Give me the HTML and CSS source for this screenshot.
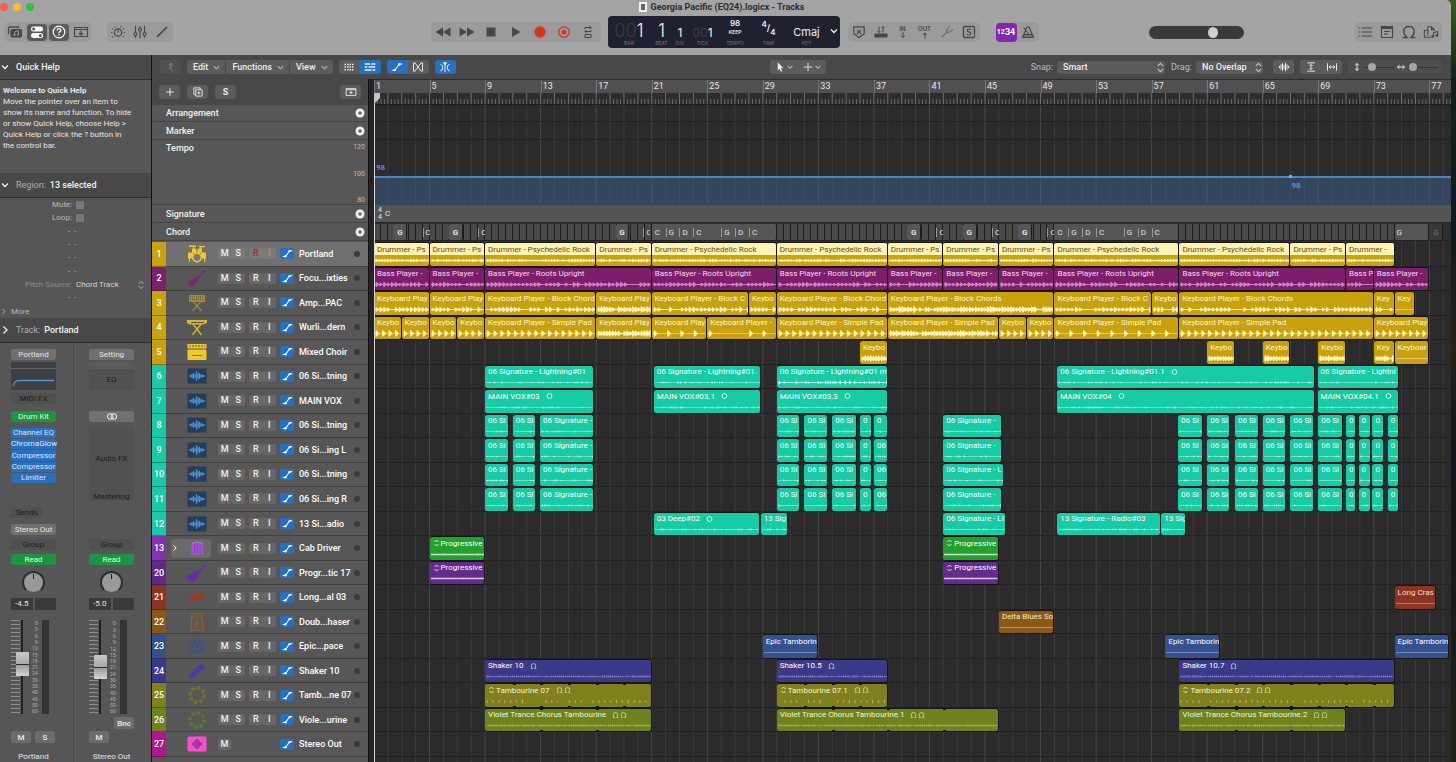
FILE: index.html
```html
<!DOCTYPE html>
<html lang="en">
<head>
    <meta charset="UTF-8">
    <meta name="viewport" content="width=device-width, initial-scale=1.0">
    <title>Georgia Pacific (EQ24).logicx - Tracks</title>
    <link rel="stylesheet" href="styles.css">
</head>
<body>
    <!-- icon sprite -->
    <svg class="sprite" aria-hidden="true">
        <symbol id="i-library" viewBox="0 0 16 16"><path d="M1.500 10V4q0-1 1-1H11q1 0 1 1" fill="none" stroke="currentColor" stroke-width="1.300"/><rect x="3.500" y="5" width="11.500" height="8.500" rx="1.500" fill="currentColor"/><path d="M8 11V7.500l3.500-.7v3.700" fill="none" stroke="#999"/><circle cx="7.300" cy="11" r="1" fill="#999"/><circle cx="10.800" cy="10.400" r="1" fill="#999"/></symbol>
        <symbol id="i-inspector" viewBox="0 0 16 16"><rect x="2" y="2.500" width="12" height="5" rx="2.500" fill="currentColor"/><rect x="2" y="9" width="12" height="5" rx="2.500" fill="currentColor"/><circle cx="4.700" cy="5" r="1.500" fill="#555"/><circle cx="11.300" cy="11.500" r="1.500" fill="#555"/></symbol>
        <symbol id="i-help" viewBox="0 0 16 16"><circle cx="8" cy="8" r="5.800" fill="none" stroke="currentColor" stroke-width="1.200"/><path d="M6.200 6.500q0-1.800 1.800-1.800t1.800 1.600q0 1-1 1.500T8 9.300" fill="none" stroke="currentColor" stroke-width="1.200"/><circle cx="8" cy="11" r=".8" fill="currentColor"/></symbol>
        <symbol id="i-tray" viewBox="0 0 16 16"><path d="M1.500 3.500h13v9h-13zM1.500 5.500h13M8 6.500v4M6 9l2 2 2-2" fill="none" stroke="currentColor" stroke-width="1.200"/></symbol>
        <symbol id="i-smart" viewBox="0 0 16 16"><circle cx="8" cy="8.500" r="3.700" fill="none" stroke="currentColor" stroke-width="1.200"/><path d="M8 4.800v4" stroke="currentColor" stroke-width="1.200"/><path d="M5 2.200l.5 1M11 2.200l-.5 1M2 4.500l1 .7M14 4.500l-1 .7M1 8.500h1.300M13.700 8.500H15M2.300 13l1-.8M13.700 13l-1-.8" stroke="currentColor" stroke-width="1.100"/></symbol>
        <symbol id="i-mixer" viewBox="0 0 16 16"><path d="M3.500 2v12M8 2v12M12.500 2v12" stroke="currentColor" stroke-width="1.200"/><g fill="#999" stroke="currentColor" stroke-width="1.200"><circle cx="3.500" cy="10" r="1.500"/><circle cx="8" cy="5.500" r="1.500"/><circle cx="12.500" cy="10" r="1.500"/></g></symbol>
        <symbol id="i-pencil" viewBox="0 0 16 16"><path d="M3 13L13 3" stroke="currentColor" stroke-width="1.700"/></symbol>
        <symbol id="i-rewind" viewBox="0 0 16 16"><path d="M8 3.500v9L.5 8zM15.500 3.500v9L8 8z" fill="currentColor"/></symbol>
        <symbol id="i-forward" viewBox="0 0 16 16"><path d="M8 3.500v9L15.500 8zM.5 3.500v9L8 8z" fill="currentColor"/></symbol>
        <symbol id="i-stop" viewBox="0 0 16 16"><rect x="3.500" y="3.500" width="9" height="9" fill="currentColor"/></symbol>
        <symbol id="i-play" viewBox="0 0 16 16"><path d="M4 3v10l8.500-5z" fill="currentColor"/></symbol>
        <symbol id="i-record" viewBox="0 0 16 16"><circle cx="8" cy="8" r="5.700" fill="#d63324"/></symbol>
        <symbol id="i-capture" viewBox="0 0 16 16"><circle cx="8" cy="8" r="5.200" fill="none" stroke="#d63324" stroke-width="1.300"/><circle cx="8" cy="8" r="2.500" fill="#d63324"/></symbol>
        <symbol id="i-cycle" viewBox="0 0 16 16"><path d="M5 5V3.500h6M9.500 2L11 3.500 9.500 5M11 6v1.500H5M6.500 6L5 7.500 6.500 9M5 10.500h6v3H5z" fill="none" stroke="currentColor"/></symbol>
        <symbol id="i-shield" viewBox="0 0 16 16"><path d="M2.800 2.800h10.400v7L8 13.500 2.800 9.800zM6 5.800l4 4M10 5.800l-4 4" fill="none" stroke="currentColor" stroke-width="1.200"/></symbol>
        <symbol id="i-replace" viewBox="0 0 16 16"><path d="M1.500 9.500h13v4h-13z" fill="currentColor"/><path d="M6 2.500v6M4.500 7L6 8.500 7.500 7M10 8.500v-6M8.500 4L10 2.500 11.500 4" fill="none" stroke="currentColor"/></symbol>
        <symbol id="i-down" viewBox="0 0 8 7"><path d="M4 0v5.500M2 3.700l2 2 2-2" fill="none" stroke="currentColor"/></symbol>
        <symbol id="i-up" viewBox="0 0 8 7"><path d="M4 6.500V1M2 3l2-2 2 2" fill="none" stroke="currentColor"/></symbol>
        <symbol id="i-tuner" viewBox="0 0 16 16"><path d="M2.500 13.500L8 8M10.500 2L7.500 6.500Q7.500 8.500 9.500 8.500L14 5.500" fill="none" stroke="currentColor" stroke-width="1.200"/></symbol>
        <symbol id="i-solo" viewBox="0 0 16 16"><rect x="2.500" y="2.500" width="11" height="11" rx="1" fill="none" stroke="currentColor" stroke-width="1.300"/><path d="M10 6q-.4-1-2-1-1.800 0-1.800 1.300T8 7.900t2 1.600Q10 11 8 11q-1.700 0-2-1.200" fill="none" stroke="currentColor" stroke-width="1.200"/></symbol>
        <symbol id="i-metronome" viewBox="0 0 16 16"><path d="M2.500 13.500L7 3h2l4.500 10.500zM3.800 10.500h8.400M9 10.500L3.500 3.500" fill="none" stroke="currentColor" stroke-width="1.200"/><path d="M4 10.500h8l1.200 2.500H3z" fill="currentColor" opacity=".5"/></symbol>
        <symbol id="i-list" viewBox="0 0 16 16"><path d="M5 4h10M5 8h10M5 12h10M1.500 4h1.700M1.500 8h1.700M1.500 12h1.700" stroke="currentColor" stroke-width="1.200"/></symbol>
        <symbol id="i-note" viewBox="0 0 16 16"><path d="M2.500 2.500h11v11h-11zM5 7.500h6M5 10h4" fill="none" stroke="currentColor" stroke-width="1.200"/><path d="M2 2h12v3H2z" fill="currentColor"/></symbol>
        <symbol id="i-loop" viewBox="0 0 16 16"><path d="M1.500 13.500H6Q2.800 11 2.800 7.600 2.800 2.500 8 2.500t5.200 5.100Q13.200 11 10 13.500h4.500" fill="none" stroke="currentColor" stroke-width="1.400"/></symbol>
        <symbol id="i-media" viewBox="0 0 18 16"><path d="M1.500 6v8h8M1.500 6h4M5.500 12V2h4l3 3v2M9.500 2v3.500h3" fill="none" stroke="currentColor" stroke-width="1.200"/><path d="M12 13V8.500l4.500-1V12" fill="none" stroke="currentColor" stroke-width="1.200"/><circle cx="11" cy="13" r="1.500" fill="currentColor"/><circle cx="15.500" cy="12" r="1.500" fill="currentColor"/></symbol>
        <symbol id="i-chev-down" viewBox="0 0 10 10"><path d="M2 3.500l3 3 3-3" fill="none" stroke="currentColor" stroke-width="1.300"/></symbol>
        <symbol id="i-chev-right" viewBox="0 0 10 10"><path d="M3.500 1.500L7 5 3.500 8.500" fill="none" stroke="currentColor" stroke-width="1.300"/></symbol>
        <symbol id="i-updown" viewBox="0 0 10 12"><path d="M2 4.500L5 1.500l3 3M2 7.500l3 3 3-3" fill="none" stroke="currentColor" stroke-width="1.300"/></symbol>
        <symbol id="i-hier" viewBox="0 0 16 16"><path d="M5 6l3-3 3 3M8 3v8q0 2 3 2M8 8.500Q5 8.500 5 11" fill="none" stroke="currentColor" stroke-width="1.200"/></symbol>
        <symbol id="i-grid" viewBox="0 0 16 16"><path d="M2 4.500h12M2 8h12M2 11.500h12" stroke="currentColor" stroke-width="2" stroke-dasharray="2 1.300"/></symbol>
        <symbol id="i-rows" viewBox="0 0 16 16"><path d="M1 4h7M9.500 4H15M1 8h3.500M6 8h9M1 12h9M11.500 12H15" stroke="currentColor" stroke-width="2"/></symbol>
        <symbol id="i-auto" viewBox="0 0 16 16"><path d="M1 12.300h3.500Q6 12 8 8.300T12 4h3" fill="none" stroke="currentColor" stroke-width="1.500"/><circle cx="5" cy="12" r="1.700" fill="currentColor"/><circle cx="11" cy="4.500" r="1.700" fill="currentColor"/></symbol>
        <symbol id="i-flex" viewBox="0 0 16 16"><path d="M2 2.500v11h2L8 8l4 5.500h2v-11h-2L8 8 4 2.500z" fill="none" stroke="currentColor" stroke-width="1.300"/></symbol>
        <symbol id="i-catch" viewBox="0 0 16 16"><path d="M5 1.500h6L8 6z" fill="currentColor"/><path d="M8 4v11M2 4.500q3 1 3 4t-3 5M14 4.500q-3 1-3 4t3 5" fill="none" stroke="currentColor" stroke-width="1.400"/></symbol>
        <symbol id="i-pointer" viewBox="0 0 16 16"><path d="M5 1.500v11l2.600-2.300 1.600 4 1.700-.8-1.700-3.700 3.300-.2z" fill="currentColor"/></symbol>
        <symbol id="i-cross" viewBox="0 0 16 16"><path d="M8 2.500v4M8 9.500v4M2.500 8h4M9.500 8h4M8 7v2M7 8h2" stroke="currentColor" stroke-width="1.300"/></symbol>
        <symbol id="i-bars" viewBox="0 0 16 16"><path d="M2 6.500v3M4 4.500v7M6 3v10M8 5v6M10 2.500v11M12 4.500v7M14 6.500v3" stroke="currentColor" stroke-width="1.300"/></symbol>
        <symbol id="i-vfit" viewBox="0 0 16 16"><path d="M3 2.500h10M3 13.500h10M8 5v6M6 6.500L8 4.500l2 2M6 9.500l2 2 2-2" fill="none" stroke="currentColor" stroke-width="1.300"/></symbol>
        <symbol id="i-hfit" viewBox="0 0 16 16"><path d="M2 3v10M14 3v10M4.500 8h7M6 6L4.300 8 6 10M10 6l1.700 2L10 10" fill="none" stroke="currentColor" stroke-width="1.300"/></symbol>
        <symbol id="i-varrow" viewBox="0 0 10 12"><path d="M5 2v8M3 4l2-2.300L7 4M3 8l2 2.300L7 8" fill="none" stroke="currentColor" stroke-width="1.200"/></symbol>
        <symbol id="i-harrow" viewBox="0 0 12 10"><path d="M2 5h8M4 3L1.700 5 4 7M8 3l2.300 2L8 7" fill="none" stroke="currentColor" stroke-width="1.200"/></symbol>
        <symbol id="i-plus" viewBox="0 0 16 16"><path d="M8 3v10M3 8h10" stroke="currentColor" stroke-width="1.300"/></symbol>
        <symbol id="i-dup" viewBox="0 0 16 16"><path d="M11 5V2.500H2.500V11H5M5 5h8.500v8.500H5zM9.200 7v4.500M7 9.200h4.500" fill="none" stroke="currentColor" stroke-width="1.200"/></symbol>
        <symbol id="i-addtray" viewBox="0 0 16 16"><path d="M1.500 3.500h13v9h-13zM1.500 5h13M8 6.500v4.500M5.800 8.700h4.400" fill="none" stroke="currentColor" stroke-width="1.200"/></symbol>
        <symbol id="i-add" viewBox="0 0 10 10"><circle cx="5" cy="5" r="4.500" fill="#eee"/><path d="M5 3v4M3 5h4" stroke="#444"/></symbol>
        <symbol id="i-link" viewBox="0 0 16 10"><circle cx="6" cy="5" r="3.200" fill="none" stroke="currentColor" stroke-width="1.200"/><circle cx="10" cy="5" r="3.200" fill="none" stroke="currentColor" stroke-width="1.200"/></symbol>
        <symbol id="i-take" viewBox="0 0 10 10"><circle cx="5" cy="5" r="3.500" fill="none" stroke="currentColor" stroke-width="1.200"/></symbol>
        <!-- instruments -->
        <symbol id="t-drums" viewBox="0 0 20 18"><g fill="currentColor"><path d="M2 .5h7V2H2zM12 1h6v1.200h-6zM6 2h1v2H6zM13 2h1v2h-1z"/><rect x="5" y="3.500" width="4.500" height="4.500" rx=".6"/><rect x="10.500" y="3.500" width="4.500" height="4.500" rx=".6"/><rect x="1" y="7.500" width="5" height="6" rx=".6"/><rect x="14" y="7.500" width="5" height="6" rx=".6"/><path d="M2 13h1v4H2zM17 13h1v4h-1z"/></g><circle cx="10" cy="12.500" r="4.200" fill="#777" stroke="currentColor" stroke-width="1.500"/></symbol>
        <symbol id="t-bass" viewBox="0 0 20 18"><path d="M18.500 1L7.500 11.500" stroke="currentColor" stroke-width="1.500"/><path d="M8 8.500l3 2.700q-1.500 1.300-2.500 3.800-2 2.800-5 2Q0 15.500 1.500 13q1-1.600 3.200-1.500Q6.500 11 8 8.500z" fill="currentColor"/></symbol>
        <symbol id="t-guitar" viewBox="0 0 20 18"><path d="M18.500 1L9 10" stroke="currentColor" stroke-width="1.700"/><path d="M9.500 6.500q1 1.600 3 2.500-1 1.700-2.500 3 0 4-3.500 5Q3 18 1.500 15.500T2 11q1.500-1 4-1 1.200-2.300 3.500-3.500z" fill="currentColor"/></symbol>
        <symbol id="t-synth" viewBox="0 0 20 18"><path d="M2 1h16v7H2z" fill="currentColor"/><path d="M3 3h14M3 5.500h14" stroke="#555" stroke-dasharray="1 1"/><path d="M5.500 17L13.500 8M14.500 17L6.500 8" stroke="currentColor" stroke-width="1.200"/></symbol>
        <symbol id="t-keys" viewBox="0 0 20 18"><path d="M0 2h20v3l-4 1.500H3L0 5z" fill="currentColor"/><path d="M4 4.500h13" stroke="#555"/><path d="M5.500 17L14 6M14.500 17L6 6" stroke="currentColor" stroke-width="1.300"/></symbol>
        <symbol id="t-amp" viewBox="0 0 20 18"><path d="M.5 1h19v4.500H.5z" fill="currentColor"/><path d="M2 3h16" stroke="#555" stroke-dasharray="2 1"/><rect x=".5" y="6.500" width="19" height="10.500" rx="1" fill="currentColor"/><path d="M5 12.500h10" stroke="#8a7010"/></symbol>
        <symbol id="t-wave" viewBox="0 0 20 16"><rect x=".5" y=".5" width="19" height="15" fill="#263d58"/><path d="M3.500 7v2M5 6v4M6.500 5v6M8 6v4M9.500 3v10M11 4.500v7M12.500 5v6M14 6v4M15.500 6.500v3M17 7v2" fill="none" stroke="#4f90d0" stroke-width="1.100"/><path d="M2 8h16" stroke="#4f90d0"/></symbol>
        <symbol id="t-cab" viewBox="0 0 20 18"><path d="M4 4h12l.5 12h-13z" fill="#a45ad8"/><path d="M5 6h10M5 8.500h10M5 11h10M5 13.500h10M7 4v11M10 4v11M13 4v11" stroke="#8340b5" stroke-width=".7"/><path d="M4 4q6-3 12 0" fill="none" stroke="#bd7bea"/></symbol>
        <symbol id="t-cymbal" viewBox="0 0 20 18"><ellipse cx="10" cy="9" rx="8" ry="3.200" fill="currentColor" transform="rotate(-10 10 9)"/></symbol>
        <symbol id="t-cajon" viewBox="0 0 20 18"><path d="M5 1h10l1 16H4z" fill="none" stroke="currentColor" stroke-width="1.500"/><path d="M6 4h8M6 7h8M6 14h8" stroke="currentColor" stroke-dasharray="2 1"/><circle cx="10" cy="10.500" r="2" fill="currentColor"/></symbol>
        <symbol id="t-burst" viewBox="0 0 20 18"><path d="M10 .5v5M10 12.500v5M1.500 9H7M13 9h5.500M4 3l3.700 3.700M12.300 11.300L16 15M16 3l-3.700 3.700M7.700 11.300L4 15M6.800 1.500l1.700 4M11.500 12.500l1.700 4M13.200 1.500l-1.700 4M8.500 12.500l-1.700 4M2.300 5.800L6.500 7.500M13.500 10.500l4.200 1.700M17.700 5.800l-4.200 1.700M6.500 10.500l-4.200 1.700" stroke="currentColor" stroke-width="1.100"/><circle cx="10" cy="9" r="1.500" fill="currentColor"/></symbol>
        <symbol id="t-shaker" viewBox="0 0 20 18"><path d="M5 13.500L15 4.500" stroke="currentColor" stroke-width="5" stroke-linecap="round"/><path d="M7 9l4 4M10 6l4 4" stroke="#57579a"/></symbol>
        <symbol id="t-tamb" viewBox="0 0 20 18"><circle cx="10" cy="9" r="7" fill="none" stroke="currentColor" stroke-width="1"/><circle cx="10" cy="9" r="7" fill="none" stroke="currentColor" stroke-width="4" stroke-dasharray="2.500 3"/></symbol>
        <symbol id="t-out" viewBox="0 0 20 16"><rect x=".5" y=".5" width="19" height="15" rx="1.500" fill="#f54fd0"/><path d="M6 6.500v3M8 4.500v7M10 3v10M12 4.500v7M14 6.500v3" stroke="#7c2b6b" stroke-width="1.300"/></symbol>
    </svg>

    <div class="window">
        <header class="titlebar">
            <div class="lights"><i class="light close"></i><i class="light mini"></i><i class="light full"></i></div>
            <h1 class="doc-title"><span class="doc-icon"></span>Georgia Pacific (EQ24).logicx - Tracks</h1>
        </header>

        <div class="control-bar">
            <div class="pill">
                <button aria-label="Library"><svg><use href="#i-library"/></svg></button>
                <button class="pressed" aria-label="Inspector"><svg><use href="#i-inspector"/></svg></button>
                <button class="pressed" aria-label="Quick Help"><svg><use href="#i-help"/></svg></button>
                <button aria-label="Toolbar"><svg><use href="#i-tray"/></svg></button>
            </div>
            <div class="pill pill-second">
                <button aria-label="Smart Controls"><svg><use href="#i-smart"/></svg></button>
                <button aria-label="Mixer"><svg><use href="#i-mixer"/></svg></button>
                <button aria-label="Editors"><svg><use href="#i-pencil"/></svg></button>
            </div>
            <div class="spring spring-wide"></div>
            <div class="pill transport">
                <button aria-label="Rewind"><svg><use href="#i-rewind"/></svg></button>
                <button aria-label="Forward"><svg><use href="#i-forward"/></svg></button>
                <button aria-label="Stop"><svg><use href="#i-stop"/></svg></button>
                <button aria-label="Play"><svg><use href="#i-play"/></svg></button>
                <button aria-label="Record"><svg><use href="#i-record"/></svg></button>
                <button aria-label="Capture"><svg><use href="#i-capture"/></svg></button>
                <button aria-label="Cycle"><svg><use href="#i-cycle"/></svg></button>
            </div>
            <div class="lcd">
                <div class="lcd-cell"><b class="big"><span class="ghost">00</span>1</b><small>BAR</small></div>
                <div class="lcd-cell"><b class="big">1</b><small>BEAT</small></div>
                <div class="lcd-cell"><b class="mid">1</b><small>DIV</small></div>
                <div class="lcd-cell"><b class="mid"><span class="ghost">00</span>1</b><small>TICK</small></div>
                <div class="lcd-cell"><b class="two">98<em>KEEP</em></b><small>TEMPO</small></div>
                <div class="lcd-cell"><b class="sig"><sup>4</sup>/<sub>4</sub></b><small>TIME</small></div>
                <div class="lcd-cell"><b class="key">Cmaj</b><small>KEY</small></div>
                <button class="lcd-more" aria-label="Display mode"><svg><use href="#i-chev-down"/></svg></button>
            </div>
            <div class="pill modes">
                <button aria-label="Low latency"><svg><use href="#i-shield"/></svg></button>
                <button aria-label="Replace"><svg><use href="#i-replace"/></svg></button>
                <button class="punch">IN<svg><use href="#i-down"/></svg></button>
                <button class="punch">OUT<svg><use href="#i-up"/></svg></button>
                <button class="faint" aria-label="Tuner"><svg><use href="#i-tuner"/></svg></button>
                <button aria-label="Solo"><svg><use href="#i-solo"/></svg></button>
            </div>
            <div class="pill click">
                <button class="count-in"><small>12</small>34</button>
                <button aria-label="Metronome"><svg><use href="#i-metronome"/></svg></button>
            </div>
            <div class="spring"></div>
            <input class="master" type="range" value="70" aria-label="Master volume">
            <div class="spring"></div>
            <div class="pill views">
                <button aria-label="Lists"><svg><use href="#i-list"/></svg></button>
                <button aria-label="Notes"><svg><use href="#i-note"/></svg></button>
                <button aria-label="Loops"><svg><use href="#i-loop"/></svg></button>
                <button aria-label="Browsers"><svg><use href="#i-media"/></svg></button>
            </div>
        </div>

        <div class="main">
            <aside class="inspector">
                <h2 class="section-head"><svg><use href="#i-chev-down"/></svg>Quick Help</h2>
                <div class="help">
                    <strong>Welcome to Quick Help</strong>
                    <p>Move the pointer over an item to<br>show its name and function. To hide<br>or show Quick Help, choose Help &gt;<br>Quick Help or click the ? button in<br>the control bar.</p>
                </div>
                <h2 class="section-head"><svg><use href="#i-chev-down"/></svg><span class="dim">Region:</span> 13 selected</h2>
                <div class="params">
                    <label class="param">Mute: <input type="checkbox"></label>
                    <label class="param">Loop: <input type="checkbox"></label>
                    <div class="param dash">- &nbsp;-</div>
                    <div class="param dash">- &nbsp;-</div>
                    <div class="param dash">- &nbsp;-</div>
                    <div class="param dash">- &nbsp;-</div>
                    <div class="param pitch"><span class="dim">Pitch Source:</span> Chord Track <svg><use href="#i-updown"/></svg></div>
                    <div class="param dash">- &nbsp;-</div>
                    <div class="param more"><svg><use href="#i-chev-right"/></svg>More</div>
                </div>
                <h2 class="section-head"><svg><use href="#i-chev-right"/></svg><span class="dim">Track:</span> Portland</h2>
                <div class="strips">
                    <section class="strip">
                        <button class="slot grey">Portland</button>
                        <svg class="eq" viewBox="0 0 45 28"><path d="M0 6.500h45" stroke="#666"/><path d="M2.500 24.500Q3 18.500 8 18.500H43" fill="none" stroke="#5c8fc4" stroke-width="1.300"/></svg>
                        <button class="slot empty">MIDI FX</button>
                        <button class="slot green instrument">Drum Kit</button>
                        <div class="plugins">
                            <button class="slot blue">Channel EQ</button>
                            <button class="slot blue">ChromaGlow</button>
                            <button class="slot blue">Compressor</button>
                            <button class="slot blue">Compressor</button>
                            <button class="slot blue">Limiter</button>
                        </div>
                        <button class="slot empty sends">Sends</button>
                        <button class="slot grey output">Stereo Out</button>
                        <button class="slot empty">Group</button>
                        <button class="slot green">Read</button>
                        <div class="knob"></div>
                        <div class="levels"><span>-4.5</span><span></span></div>
                        <div class="fader-box">
                            <div class="ticks"></div>
                            <input class="fader" type="range" value="54" aria-label="Portland volume">
                            <div class="scale"></div>
                            <div class="meter"></div>
                        </div>
                        <div class="bnc"></div>
                        <div class="ms"><button>M</button><button>S</button></div>
                        <div class="strip-name">Portland</div>
                    </section>
                    <section class="strip">
                        <button class="slot grey">Setting</button>
                        <button class="eq eq-empty">EQ</button>
                        <div class="slot"></div>
                        <button class="slot grey instrument" aria-label="Stereo"><svg><use href="#i-link"/></svg></button>
                        <div class="audio-fx"><span>Audio FX</span><span>Mastering</span></div>
                        <button class="slot empty group">Group</button>
                        <button class="slot green">Read</button>
                        <div class="knob"></div>
                        <div class="levels"><span>-5.0</span><span></span></div>
                        <div class="fader-box">
                            <div class="ticks"></div>
                            <input class="fader" type="range" value="51" aria-label="Stereo Out volume">
                            <div class="scale"></div>
                            <div class="meter"></div>
                        </div>
                        <div class="bnc"><button>Bnc</button></div>
                        <div class="ms"><button>M</button></div>
                        <div class="strip-name">Stereo Out</div>
                    </section>
                </div>
            </aside>

            <main class="tracks-area">
                <div class="toolbar">
                    <button class="tool muted" aria-label="Up"><svg><use href="#i-hier"/></svg></button>
                    <div class="tools menus">
                        <button>Edit <svg><use href="#i-chev-down"/></svg></button>
                        <button>Functions <svg><use href="#i-chev-down"/></svg></button>
                        <button>View <svg><use href="#i-chev-down"/></svg></button>
                    </div>
                    <div class="tools">
                        <button aria-label="Grid"><svg><use href="#i-grid"/></svg></button>
                        <button class="on" aria-label="Rows"><svg><use href="#i-rows"/></svg></button>
                    </div>
                    <div class="tools">
                        <button class="on" aria-label="Automation"><svg><use href="#i-auto"/></svg></button>
                        <button aria-label="Flex"><svg><use href="#i-flex"/></svg></button>
                    </div>
                    <button class="tool on" aria-label="Catch playhead"><svg><use href="#i-catch"/></svg></button>
                    <div class="spring toolbar-left"></div>
                    <div class="tools pointers">
                        <button aria-label="Pointer tool"><svg><use href="#i-pointer"/></svg><svg class="tiny"><use href="#i-chev-down"/></svg></button>
                        <button aria-label="Marquee tool"><svg><use href="#i-cross"/></svg><svg class="tiny"><use href="#i-chev-down"/></svg></button>
                    </div>
                    <div class="spring toolbar-right"></div>
                    <label class="pick">Snap: <span class="select snap"><select><option>Smart</option></select><svg><use href="#i-updown"/></svg></span></label>
                    <label class="pick">Drag: <span class="select drag"><select><option>No Overlap</option></select><svg><use href="#i-updown"/></svg></span></label>
                    <button class="tool wave" aria-label="Waveform zoom"><svg><use href="#i-bars"/></svg></button>
                    <div class="tools">
                        <button aria-label="Fit vertically"><svg><use href="#i-vfit"/></svg></button>
                        <button aria-label="Fit horizontally"><svg><use href="#i-hfit"/></svg></button>
                    </div>
                    <div class="tools zooms">
                        <svg><use href="#i-varrow"/></svg><input type="range" value="20" aria-label="Vertical zoom">
                        <svg><use href="#i-harrow"/></svg><input type="range" value="4" aria-label="Horizontal zoom">
                    </div>
                </div>

                <div class="arrange">
                    <div class="headers">
                        <div class="head-tools">
                            <button class="tool" aria-label="New track"><svg><use href="#i-plus"/></svg></button>
                            <button class="tool" aria-label="Duplicate track"><svg><use href="#i-dup"/></svg></button>
                            <button class="tool letter">S</button>
                            <button class="tool last" aria-label="Global tracks"><svg><use href="#i-addtray"/></svg></button>
                        </div>
                        <div class="global g-arr">Arrangement <button aria-label="Add arrangement"><svg><use href="#i-add"/></svg></button></div>
                        <div class="global">Marker <button aria-label="Add marker"><svg><use href="#i-add"/></svg></button></div>
                        <div class="global g-tempo">Tempo <span class="tempo-scale"><i>120</i><i>100</i><i>80</i></span></div>
                        <div class="global">Signature <button aria-label="Add signature"><svg><use href="#i-add"/></svg></button></div>
                        <div class="global">Chord <button aria-label="Add chord"><svg><use href="#i-add"/></svg></button></div>
                        <div class="track-list" id="trackList"></div>
                    </div>
                    <div class="timeline">
                        <div class="canvas">
                            <svg class="grid-lines" id="gridLines"></svg>
                            <div class="ruler" id="ruler"></div>
                            <svg class="ruler-ticks" id="rulerTicks"></svg>
                            <div class="lane g-arr"></div>
                            <div class="lane"></div>
                            <div class="lane g-tempo">
                                <div class="tempo-fill"></div>
                                <span class="tempo-start">98</span>
                                <span class="tempo-point">98</span>
                            </div>
                            <div class="lane signature"><span class="meter-sig"><i>4</i><i>4</i></span>C</div>
                            <div class="lane chords" id="chords"></div>
                            <div class="lanes" id="lanes"></div>
                            <div class="playhead"></div>
                        </div>
                    </div>
                </div>
            </main>
        </div>
    </div>
    <script src="script.js"></script>
</body>
</html>
```
FILE: styles.css
```css
* {
    box-sizing: border-box;
}
body {
    margin: 0;
    height: 100vh;
    overflow: hidden;
    padding-right: 5px;
    background: linear-gradient(180deg, #3d5a20 0, #15201c 10%, #101a20 30%, #2a2018 45%, #10161c 60%, #1d2416 100%);
    font-family: Roboto, "Liberation Sans", sans-serif;
    font-size: 9px;
    color: #e6e6e6;
}
h1, h2, p {
    margin: 0;
    font-size: inherit;
}
button, input, select {
    margin: 0;
    padding: 0;
    border: 0;
    background: none;
    font: inherit;
    color: inherit;
}
i, em {
    font-style: normal;
}
.sprite {
    position: absolute;
    width: 0;
    height: 0;
}
.window {
    display: flex;
    flex-direction: column;
    height: 100%;
    border-radius: 0 5px 0 0;
    overflow: hidden;
    background: #a4a4a4;
}
.spring {
    flex: 110 1 0;
}
.spring-wide {
    flex-grow: 257;
}

/* title bar */
.titlebar {
    display: flex;
    align-items: center;
    height: 14px;
    flex: none;
}
.lights {
    display: flex;
    gap: 5px;
    width: 80px;
}
.light {
    width: 8px;
    height: 8px;
    border-radius: 50%;
}
.close { background: #fc5b57; }
.mini { background: #fdbb2e; }
.full { background: #28c63f; }
.doc-title {
    display: flex;
    gap: 4px;
    align-items: center;
    margin: 0 auto;
    padding-right: 88px;
    color: #2c2c2c;
    font-weight: 700;
}
.doc-icon {
    width: 8px;
    height: 10px;
    border: 2px solid #f2f2f2;
    background: #666;
}

/* control bar */
.control-bar {
    display: flex;
    align-items: center;
    height: 41px;
    flex: none;
    padding: 0 9px 5px 4px;
    color: #474747;
}
.pill {
    display: flex;
    align-items: center;
    height: 20px;
    border-radius: 5px;
    background: #9b9b9b;
}
.pill button {
    display: flex;
    align-items: center;
    justify-content: center;
    width: 22px;
    height: 19px;
}
.pill svg {
    width: 16px;
    height: 16px;
}
.pill .pressed {
    background: #5a5a5a;
    color: #fff;
    border-radius: 5px;
    box-shadow: inset 0 0 0 1px #9b9b9b;
}
.pill-second {
    margin-left: 15px;
}
.transport {
    width: 170px;
}
.transport button {
    width: 25px;
}
.lcd {
    display: grid;
    grid-template-columns: 43px 22px 15px 30px 35px 32px 44px 11px;
    height: 32px;
    margin: 0 8px 0 7px;
    border-radius: 4px;
    background: #20212e;
    color: #eef0f6;
    font-family: Inter, "Liberation Sans", sans-serif;
}
.lcd-cell {
    display: flex;
    flex-direction: column;
    align-items: center;
}
.lcd-cell b {
    display: flex;
    align-items: flex-end;
    justify-content: center;
    height: 24px;
    font-weight: 400;
    line-height: 18px;
}
.lcd-cell small {
    font-size: 5px;
    line-height: 6px;
    color: #6d7080;
}
.lcd-cell .big {
    font-size: 18px;
    font-weight: 300;
    line-height: 18px;
}
.lcd-cell .mid {
    font-size: 12px;
    line-height: 15px;
}
.ghost {
    color: #3a3b4a;
}
.lcd-cell .two {
    flex-direction: column;
    align-items: center;
    font-size: 8px;
    font-weight: 600;
    line-height: 9px;
}
.two em {
    font-size: 5px;
}
.lcd-cell .sig {
    align-items: center;
    font-size: 9px;
    font-weight: 600;
}
.sig sup {
    margin-bottom: 8px;
    vertical-align: baseline;
    font-size: 8px;
    line-height: 8px;
}
.sig sub {
    margin-top: 8px;
    vertical-align: baseline;
    font-size: 8px;
    line-height: 8px;
}
.lcd-cell .key {
    font-size: 11px;
    line-height: 15px;
}
.lcd-more svg {
    width: 10px;
    height: 10px;
}
.pill .punch {
    flex-direction: column;
    font-family: Inter, sans-serif;
    font-size: 6px;
    font-weight: 600;
    line-height: 7px;
}
.pill .punch svg {
    width: 8px;
    height: 7px;
}
.faint {
    opacity: .5;
}
.click {
    margin-left: 16px;
}
.click .count-in {
    width: 21px;
    border-radius: 4px;
    background: #8427b0;
    color: #fff;
    font-size: 9px;
    font-weight: 700;
}
.count-in small {
    font-size: 7px;
}
.master {
    appearance: none;
    width: 95px;
    height: 13px;
    border-radius: 7px;
    background: #3a3a3a;
}
.master::-webkit-slider-thumb {
    appearance: none;
    width: 10px;
    height: 11px;
    border-radius: 50%;
    background: #cfcfcf;
}

/* main */
.main {
    display: flex;
    flex: 1;
    min-height: 0;
    background: #111;
}
.inspector {
    display: flex;
    flex-direction: column;
    width: 151px;
    margin-right: 1px;
    flex: none;
    background: #565656;
}
.section-head {
    display: flex;
    align-items: center;
    gap: 4px;
    height: 25px;
    flex: none;
    background: #484848;
    border-bottom: 1px solid #303030;
    color: #f2f2f2;
    font-weight: 500;
}
.section-head svg {
    width: 10px;
    height: 10px;
    margin-right: 2px;
}
.dim {
    color: #b0b0b0;
    font-weight: 400;
}
.help {
    height: 93px;
    padding: 5px 3px;
    font-size: 8px;
    line-height: 11px;
    white-space: nowrap;
}
.params {
    display: flex;
    flex-direction: column;
    height: 120px;
    color: #b9b9b9;
    font-size: 8px;
}
.param {
    display: flex;
    flex: 1;
    align-items: center;
    gap: 4px;
    padding-left: 52px;
}
.param input {
    appearance: none;
    width: 8px;
    height: 8px;
    border-radius: 1px;
    background: #777;
}
.dash {
    padding-left: 68px;
}
.pitch {
    padding: 0 6px 0 25px;
    color: #d4d4d4;
}
.pitch .dim {
    color: #8e8e8e;
}
.pitch svg {
    width: 8px;
    height: 10px;
    margin-left: auto;
    opacity: .5;
}
.more {
    padding-left: 0;
}
.more svg {
    width: 7px;
    height: 7px;
}

/* channel strips */
.strips {
    display: flex;
    flex: 1;
    min-height: 0;
}
.strip {
    display: flex;
    flex-direction: column;
    width: 78px;
    padding: 6px 17px 0 15px;
}
.strip:first-child {
    width: 74px;
    padding-left: 11px;
    border-right: 1px solid #484848;
}
.slot {
    height: 11px;
    flex: none;
    border-radius: 2px;
    font-size: 8px;
    line-height: 11px;
    text-align: center;
    white-space: nowrap;
}
.slot svg {
    display: block;
    width: 14px;
    height: 9px;
    margin: 0 auto;
}
.grey { background: #707070; }
.green { background: #1f9440; color: #d9ffe0; }
.blue { background: #2a6fbd; color: #d6e9ff; }
.empty { background: #505050; color: #1c1c1c; }
.eq {
    width: 100%;
    height: 28px;
    flex: none;
    margin: 2px 0 3px;
    background: #3c3f44;
}
.eq-empty {
    background: #515151;
    border-top: 7px solid #5a5a5a;
    color: #1c1c1c;
    font-size: 8px;
}
.instrument {
    margin: 7px 0 6px;
}
.plugins {
    display: flex;
    flex-direction: column;
    height: 56px;
    gap: 1px;
}
.plugins .blue {
    height: auto;
    min-height: 0;
    flex: 1;
    line-height: 10px;
}
.sends {
    width: 32px;
    margin: 24px 0 6px;
}
.output {
    margin-bottom: 4px;
}
.slot + .green {
    margin-top: 4px;
}
.slot + .instrument {
    margin-top: 7px;
}
.audio-fx {
    display: flex;
    flex-direction: column;
    height: 75px;
    padding: 26px 0 0;
    justify-content: space-between;
    background: #515151;
    color: #1c1c1c;
    font-size: 8px;
    text-align: center;
}
.group {
    margin-top: 38px;
}
.knob {
    width: 23px;
    height: 23px;
    margin: 6px auto 0;
    flex: none;
    border: 2px solid #2e2e2e;
    border-bottom-color: #565656;
    border-radius: 50%;
    background: linear-gradient(#222, #222) center 1px / 1px 5px no-repeat, #999;
}
.levels {
    display: flex;
    gap: 2px;
    margin: 4px 0 10px;
    font-size: 8px;
    line-height: 12px;
    text-align: center;
}
.levels span {
    flex: 1;
    height: 12px;
    background: #3a3a3a;
}
.fader-box {
    display: flex;
    height: 94px;
    flex: none;
    margin-right: 7px;
}
.ticks {
    width: 9px;
    background: repeating-linear-gradient(180deg, #8e8e8e 0 1px, transparent 1px 4px);
}
.fader {
    appearance: none;
    writing-mode: vertical-lr;
    direction: rtl;
    width: 14px;
    height: 94px;
    margin-left: -5px;
    background: linear-gradient(#222, #222) center / 2px 100% no-repeat;
}
.fader::-webkit-slider-thumb {
    appearance: none;
    width: 13px;
    height: 24px;
    border-radius: 1px;
    background: linear-gradient(#c9c9c9 0, #aaa 48%, #222 49%, #222 52%, #999 53%, #d6d6d6 100%);
}
.scale {
    display: flex;
    flex-direction: column;
    justify-content: space-between;
    width: 10px;
    font-size: 5px;
    line-height: 6px;
    text-align: right;
    color: #b0b0b0;
}
.meter {
    width: 7px;
    margin-left: auto;
    background: #333;
}
.bnc {
    display: flex;
    justify-content: flex-end;
    height: 14px;
    margin-top: 3px;
}
.bnc button, .ms button {
    width: 20px;
    height: 12px;
    border-radius: 2px;
    background: #6c6c6c;
    font-size: 8px;
    font-weight: 600;
}
.ms {
    display: flex;
    gap: 4px;
}
.strip-name {
    margin-top: 9px;
    font-size: 8px;
    line-height: 10px;
    text-align: center;
    white-space: nowrap;
}

/* tracks toolbar */
.tracks-area {
    display: flex;
    flex: 1;
    flex-direction: column;
    min-width: 0;
}
.toolbar {
    display: flex;
    align-items: center;
    gap: 6px;
    height: 24px;
    flex: none;
    padding: 0 9px 0 8px;
    background: #484848;
    font-size: 9px;
}
.tool, .tools {
    display: flex;
    align-items: center;
    justify-content: center;
    height: 14px;
    border-radius: 3px;
    background: #5c5c5c;
    color: #ececec;
}
.tool {
    width: 21px;
}
.tools {
    overflow: hidden;
}
.tools button {
    display: flex;
    align-items: center;
    justify-content: center;
    height: 14px;
    width: 21px;
}
.tool svg, .tools svg {
    width: 12px;
    height: 12px;
}
.tools .on, .tool.on {
    background: #256fc4;
}
.tool.muted {
    background: #505050;
    color: #888;
}
.menus .menus, .tools.menus button {
    width: auto;
    gap: 4px;
    padding: 0 4px 0 6px;
    font-weight: 500;
}
.menus button + button {
    border-left: 1px solid #4a4a4a;
}
.tools.menus svg {
    width: 9px;
    height: 9px;
    opacity: .6;
}
.toolbar-left {
    flex-grow: 316;
}
.toolbar-right {
    flex-grow: 201;
}
.tools.pointers button {
    width: 28px;
}
.tools.pointers .tiny {
    width: 8px;
    height: 8px;
    opacity: .6;
}
.pick {
    display: flex;
    align-items: center;
    gap: 4px;
    color: #bdbdbd;
}
.select {
    display: flex;
    align-items: center;
    height: 13px;
    border-radius: 3px;
    background: #5a5a5a;
    color: #f0f0f0;
}
.select select {
    appearance: none;
    flex: 1;
    padding-left: 6px;
    font-weight: 500;
}
.select svg {
    width: 9px;
    height: 11px;
    opacity: .7;
}
.snap { width: 108px; }
.drag { width: 67px; }
.wave { margin-left: 4px; }
.zooms {
    gap: 2px;
    padding: 0 4px;
    background: #4e4e4e;
}
.zooms svg {
    width: 10px;
    height: 10px;
}
.zooms input {
    appearance: none;
    width: 30px;
    height: 12px;
    background: linear-gradient(#333, #333) center / 100% 1px no-repeat;
}
.zooms input::-webkit-slider-thumb {
    appearance: none;
    width: 8px;
    height: 8px;
    border-radius: 50%;
    background: #a5a5a5;
}

/* arrange window */
.arrange {
    display: flex;
    flex: 1;
    min-height: 0;
}
.headers {
    display: flex;
    flex-direction: column;
    width: 216px;
    margin-right: 1px;
    flex: none;
    background: #575757;
}
.head-tools {
    display: flex;
    align-items: center;
    gap: 7px;
    height: 26px;
    padding: 0 7px;
    flex: none;
    background: #484848;
}
.letter {
    font-weight: 700;
}
.last {
    margin-left: auto;
}
.global, .lane {
    height: 18px;
    flex: none;
    border-bottom: 1px solid #454545;
}
.global {
    display: flex;
    align-items: center;
    justify-content: space-between;
    padding: 0 3px 0 14px;
    color: #f2f2f2;
    font-weight: 500;
}
.global svg {
    display: block;
    width: 10px;
    height: 10px;
}
.g-arr {
    height: 17px;
}
.g-tempo {
    height: 65px;
}
.global.g-tempo {
    align-items: stretch;
    padding: 3px 3px 0 14px;
}
.tempo-scale {
    display: flex;
    flex-direction: column;
    justify-content: space-between;
    text-align: right;
    font-size: 7px;
    font-weight: 400;
    color: #bbb;
}
.track-list, .lanes {
    display: grid;
    flex: 1;
    grid-auto-rows: minmax(0, 1fr);
    padding: 1px 0 5px;
    min-height: 0;
}
.track {
    display: flex;
    align-items: center;
    border-bottom: 1px solid #404040;
    min-height: 0;
}
.track.selected {
    background: #707070;
}
.track-no {
    display: flex;
    align-items: center;
    justify-content: center;
    align-self: stretch;
    width: 14px;
    margin-bottom: -1px;
    border-bottom: 1px solid rgba(0, 0, 0, .3);
    color: #fff;
    font-weight: 500;
}
.track-icon {
    display: flex;
    align-items: center;
    justify-content: flex-end;
    gap: 10px;
    width: 41px;
    height: 19px;
    margin-right: 11px;
    border-radius: 3px;
}
.track-icon.stack {
    background: #6a6a6a;
    width: 40px;
    margin: 0 7px 0 5px;
    padding-right: 4px;
}
.track-icon svg {
    width: 20px;
    height: 18px;
}
.track-icon .disclosure {
    width: 8px;
    height: 8px;
}
.btn-pair {
    display: flex;
    width: 27px;
    height: 11px;
    margin-right: 4px;
    flex: none;
}
.btn-pair button {
    flex: 1;
    background: #676767;
    color: #f2f2f2;
    font-weight: 500;
    line-height: 11px;
    border-radius: 2px;
}
.btn-pair .only {
    flex: none;
    width: 13px;
}
.selected .btn-pair button { background: #7a7a7a; }
.selected .btn-pair .rec { color: #b8231c; }
.selected .btn-pair .mon { color: #c88f3a; }
.auto {
    display: flex;
    justify-content: center;
    width: 14px;
    height: 11px;
    flex: none;
    border-radius: 2px;
    background: #256fc4;
    color: #fff;
}
.auto svg {
    width: 11px;
    height: 11px;
}
.track-name {
    flex: 1;
    padding-left: 5px;
    color: #fff;
    font-weight: 500;
    white-space: nowrap;
}
.track-dot {
    width: 6px;
    height: 6px;
    margin-right: 8px;
    border-radius: 50%;
    background: #3a3a3a;
}

/* timeline */
.timeline {
    flex: 1;
    min-width: 0;
    padding-left: 5px;
    background: #242424;
}
.canvas {
    position: relative;
    display: flex;
    flex-direction: column;
    height: 100%;
    overflow: hidden;
    background: #2b2b2b;
}
.ruler {
    position: relative;
    height: 13px;
    flex: none;
    margin-top: 1px;
    background: #505050;
}
.ruler span {
    position: absolute;
    top: 0;
    height: 13px;
    padding-left: 1px;
    border-left: 1px solid #777;
    color: #e8e8e8;
    line-height: 12px;
}
.ruler-ticks {
    width: 100%;
    height: 12px;
    flex: none;
    background: #2d2d2d;
    border-bottom: 1px solid #1e1e1e;
}
.grid-lines {
    position: absolute;
    inset: 26px 0 0 0;
    width: 100%;
    height: 100%;
}
.lane {
    position: relative;
    border-bottom-color: #232323;
}
.tempo-fill {
    height: 29px;
    margin-top: 36px;
    border-top: 2px solid #4787c4;
    background: rgba(62, 98, 146, .5);
}
.tempo-start, .tempo-point {
    position: absolute;
    color: #5c9fe6;
    font-size: 8px;
    font-weight: 500;
}
.tempo-start {
    left: 2px;
    top: 23px;
}
.tempo-point {
    left: 85%;
    top: 41px;
    padding-left: 2px;
}
.tempo-point::before {
    content: "";
    position: absolute;
    left: 0;
    top: -6px;
    width: 3px;
    height: 3px;
    background: #6bb0f5;
}
.signature {
    display: flex;
    align-items: center;
    gap: 3px;
    padding-left: 4px;
    background: #545454;
    font-size: 8px;
}
.meter-sig {
    display: flex;
    flex-direction: column;
    font-size: 7px;
    line-height: 7px;
}
.chords {
    background: #2e2e2e;
    overflow: hidden;
}
.chord {
    position: absolute;
    top: 1px;
    bottom: 0;
    overflow: hidden;
    border-right: 1px solid #1c1c1c;
    background: #484848;
    font-size: 8px;
    line-height: 17px;
}
.chord.boxed {
    background: #565656;
    text-align: center;
    font-weight: 700;
    border-radius: 2px;
}
.chord.section {
    background: #555;
    border-radius: 2px;
}
.chord.name {
    background: none;
    border: 0;
    padding-left: 3px;
}
.chord.name.cut::before {
    content: "";
    position: absolute;
    left: 0;
    top: 4px;
    height: 9px;
    border-left: 1px solid #999;
}
.chord.off {
    background: #383838;
    color: #777;
    padding-left: 4px;
}
.lane-row {
    position: relative;
    border-bottom: 1px solid #222;
    min-height: 0;
}
.playhead {
    position: absolute;
    left: 0;
    top: 20px;
    bottom: 0;
    width: 1px;
    background: #d5d5d5;
}
.playhead::before {
    content: "";
    position: absolute;
    left: 0;
    top: -6px;
    width: 6px;
    height: 11px;
    background: #c4c4c4;
    clip-path: polygon(0 0, 100% 0, 100% 45%, 0 100%);
}

/* regions */
.region {
    position: absolute;
    top: 0;
    bottom: -1px;
    overflow: hidden;
    border: 1px solid #161616;
    border-left-width: 0;
    border-radius: 3px;
    color: #fff;
    font-size: 8px;
    white-space: nowrap;
}
.region .label {
    display: flex;
    align-items: center;
    gap: 1px;
    height: 12px;
    padding-left: 3px;
}
.label .mark {
    width: 7px;
    height: 8px;
    flex: none;
}
.label .gap {
    width: 4px;
}
.region .wave-shape {
    position: absolute;
    left: 1px;
    bottom: 0;
    width: calc(100% - 1px);
    height: 11px;
    fill: rgba(255, 255, 255, .72);
}
.cream {
    background: #c9a30f;
}
.cream .label {
    background: #fdf2b2;
    color: #5f4d10;
}
.cream .wave-shape, .gold .wave-shape { fill: #fcf1b8; }
.gold { background: #c8a10d; color: #fdf6d4; }
.plum { background: #7e1d6c; color: #f3dcf0; }
.plum .wave-shape { fill: #c888bd; }
.teal { background: #17cba4; }
.teal .wave-shape { fill: #b9f7e8; }
.leaf { background: #22a12f; }
.violet { background: #642b8a; }
.rust { background: #8b3420; color: #fbdcd2; }
.brown { background: #8a5817; color: #fbe8c8; }
.navy { background: #35518f; }
.indigo { background: #3c3989; }
.olive { background: #81801e; color: #f7f6d2; }
.moss { background: #6e821e; color: #f3f8d2; }
.indigo .wave-shape { fill: #7c7ac2; }
.olive .wave-shape { fill: #b9b867; }
.moss .wave-shape { fill: #a4b560; }
.notch {
    position: absolute;
    top: -1px;
    bottom: -1px;
    width: 3px;
    background: linear-gradient(#161616 0 2px, transparent 2px calc(100% - 2px), #161616 calc(100% - 2px));
}
```
FILE: script.js
```js
// number of bars visible in the timeline
const BARS = 77.56;
const PX = 14; // drawing units per bar for waveforms

const pct = (bars) => (bars / BARS * 100).toFixed(3) + '%';

const COLORS = {
    gold: '#c9a20f', plum: '#7d1f6d', teal: '#18cba5', purple: '#8332b3', violet: '#5f2a86',
    rust: '#8c3520', brown: '#8a5814', navy: '#34508f', indigo: '#3a3889', olive: '#80801c',
    moss: '#6f831c', pink: '#b4158c'
};
const DR = 'Drummer - Psychedelic Rock', DS = 'Drummer - Ps';
const BR = 'Bass Player - Roots Upright', BS = 'Bass Player -';
const KP = 'Keyboard Play', KC = 'Keyboard Player - Block Chords', KS = 'Keyboard Player - Simple Pad';
const KCD = 'Keyboard Player - Block Chord', KCC = 'Keyboard Player - Block C';

// short vocal cuts shared by the four harmony tracks: [start, end, name]
function harmony(end, name, short) {
    const s = '06 Si';
    return [
        [9, 10.75, s], [11, 12.7, s], [12.95, 16.85, '06 Signature -'],
        [30, 31.7, s], [32, 33.7, s], [34, 35.75, s], [36, 36.9, '0'], [37, 38, short],
        [42, end, name],
        [58.9, 60.7, s], [61, 62.65, s], [63, 64.75, s], [65, 66.7, s], [67, 68.7, s], [69, 70.75, s],
        [71, 71.7, '0'], [71.9, 72.8, '0'], [72.9, 73.75, '0'], [74, 74.85, '0']
    ];
}

// [start bar, end bar, name, options]
const TRACKS = [
    { no: 1, name: 'Portland', icon: 't-drums', tint: '#f0c92c', color: 'gold', skin: 'cream', wave: 'drum', selected: true,
      regions: [[1, 5, DS], [5, 9, DS], [9, 17, DR], [17, 21, DS], [21, 30, DR], [30, 38, DR], [38, 42, DS], [42, 46, DS], [46, 50, DS], [50, 59, DR], [59, 67, DR], [67, 71, DS], [71, 74.5, 'Drummer -']] },
    { no: 2, name: 'Focu...ixties', icon: 't-bass', tint: '#7d2470', color: 'plum', skin: 'plum', wave: 'bass',
      regions: [[1, 5, BS], [5, 9, BS], [9, 21, BR], [21, 30, BR], [30, 38, BR], [38, 42, BS], [42, 46, BS], [46, 50, BS], [50, 59, BR], [59, 71, BR], [71, 73, 'Bass P'], [73, 76.95, BS]] },
    { no: 3, name: 'Amp...PAC', icon: 't-synth', tint: '#a08940', color: 'gold', skin: 'gold', wave: 'key',
      regions: [[1, 5, KP], [5, 9, KP], [9, 17, KCD], [17, 21, KP, { wave: 'dense' }], [21, 28, KCC], [28, 30, 'Keybo'], [30, 38, KCD], [38, 50, KC, { wave: 'dense' }], [50, 57, KCC], [57, 59, 'Keybo'], [59, 73, KC], [73, 74.5, 'Key'], [74.5, 75.95, 'Key', { wave: 'flat' }]] },
    { no: 4, name: 'Wurli...dern', icon: 't-keys', tint: '#dcb826', color: 'gold', skin: 'gold', wave: 'pad',
      regions: [[1, 3, 'Keybo'], [3, 5, 'Keybo'], [5, 7, 'Keybo'], [7, 9, 'Keybo'], [9, 17, KS], [17, 21, KP, { wave: 'dense' }], [21, 25, KP, { wave: 'slow' }], [25, 30, 'Keyboard Player -', { wave: 'slow' }], [30, 38, KS], [38, 46, KS, { wave: 'dense' }], [46, 48, 'Keybo'], [48, 50, 'Keybo'], [50, 59, KS, { wave: 'slow' }], [59, 73, KS], [73, 76.95, KP]] },
    { no: 5, name: 'Mixed Choir', icon: 't-amp', tint: '#f0c92c', color: 'gold', skin: 'gold', wave: 'dense',
      regions: [[36, 38, 'Keybo'], [61, 63, 'Keybo'], [65, 67, 'Keybo'], [69, 71, 'Keybo'], [73, 74.5, 'Key'], [74.5, 76.95, 'Keyboar', { wave: 'flat' }]] },
    { no: 6, name: '06 Si...tning', icon: 't-wave', color: 'teal', skin: 'teal', wave: 'voice',
      regions: [[9, 16.85, '06 Signature - Lightning#01'], [21.15, 28.9, '06 Signature - Lightning#01.'], [30, 38, '06 Signature - Lightning#01 m', { wave: 'loud' }], [50.2, 68.75, '06 Signature - Lightning#01.1', { take: true }], [68.95, 74.8, '06 Signature - Lightni']] },
    { no: 7, name: 'MAIN VOX', icon: 't-wave', color: 'teal', skin: 'teal', wave: 'voice',
      regions: [[9, 16.85, 'MAIN VOX#03', { take: true }], [21.15, 28.9, 'MAIN VOX#03.1', { take: true }], [30, 38, 'MAIN VOX#03.3', { take: true }], [50.2, 68.75, 'MAIN VOX#04', { take: true }], [68.95, 74.8, 'MAIN VOX#04.1', { take: true }]] },
    { no: 8, name: '06 Si...tning', icon: 't-wave', color: 'teal', skin: 'teal', wave: 'voice', regions: harmony(46.25, '06 Signature -', '0') },
    { no: 9, name: '06 Si...ing L', icon: 't-wave', color: 'teal', skin: 'teal', wave: 'voice', regions: harmony(46.25, '06 Signature -', '06') },
    { no: 10, name: '06 Si...tning', icon: 't-wave', color: 'teal', skin: 'teal', wave: 'voice', regions: harmony(46.4, '06 Signature - L', '06') },
    { no: 11, name: '06 Si...ing R', icon: 't-wave', color: 'teal', skin: 'teal', wave: 'voice', regions: harmony(46.25, '06 Signature -', '06') },
    { no: 12, name: '13 Si...adio', icon: 't-wave', color: 'teal', skin: 'teal', wave: 'voice',
      regions: [[21.15, 28.8, '03 Deep#02', { take: true }], [28.85, 30.8, '13 Sig'], [42, 46.5, '06 Signature - LI'], [50.2, 57.65, '13 Signature - Radio#03'], [57.7, 59.5, '13 Sig']] },
    { no: 13, name: 'Cab Driver', icon: 't-cab', color: 'purple', skin: 'leaf', wave: 'line', stack: true,
      regions: [[5, 9, 'Progressive', { tempo: true }], [42, 46, 'Progressive', { tempo: true }]] },
    { no: 20, name: 'Progr...tic 17', icon: 't-guitar', tint: '#6b2aa8', color: 'violet', skin: 'violet', wave: 'line',
      regions: [[5, 9, 'Progressive', { tempo: true }], [42, 46, 'Progressive', { tempo: true }]] },
    { no: 21, name: 'Long...al 03', icon: 't-cymbal', tint: '#9a3a1e', color: 'rust', skin: 'rust', wave: 'flat',
      regions: [[74.5, 77.5, 'Long Cras']] },
    { no: 22, name: 'Doub...haser', icon: 't-cajon', tint: '#87602c', color: 'brown', skin: 'brown', wave: 'flat',
      regions: [[46, 50, 'Delta Blues So']] },
    { no: 23, name: 'Epic...pace', icon: 't-burst', tint: '#34508f', color: 'navy', skin: 'navy', wave: 'flat',
      regions: [[29, 33, 'Epic Tamborin'], [58, 61.95, 'Epic Tamborin'], [74.5, 78.45, 'Epic Tamborin']] },
    { no: 24, name: 'Shaker 10', icon: 't-shaker', tint: '#413ea6', color: 'indigo', skin: 'indigo', wave: 'tick',
      regions: [[9, 21, 'Shaker 10', { loops: 1 }], [30, 38, 'Shaker 10.5', { loops: 1 }], [59, 74.5, 'Shaker 10.7', { loops: 1 }]] },
    { no: 25, name: 'Tamb...ne 07', icon: 't-tamb', tint: '#73722a', color: 'olive', skin: 'olive', wave: 'sparse',
      regions: [[9, 21, 'Tambourine 07', { loops: 2, tempo: true, every: 2 }], [30, 38, 'Tambourine 07.1', { loops: 2, tempo: true, every: 2 }], [59, 74.5, 'Tambourine 07.2', { loops: 2, tempo: true, every: 2 }]] },
    { no: 26, name: 'Viole...urine', icon: 't-tamb', tint: '#66742a', color: 'moss', skin: 'moss', wave: 'tick',
      regions: [[9, 21, 'Violet Trance Chorus Tambourine', { loops: 2, every: 4 }], [30, 46, 'Violet Trance Chorus Tambourine.1', { loops: 2, every: 4 }], [59, 71, 'Violet Trance Chorus Tambourine.2', { loops: 2, every: 4 }]] },
    { no: 27, name: 'Stereo Out', icon: 't-out', color: 'pink', output: true, regions: [] }
];

// gap between hits, peak height, tail length, chance of a hit, idle level
const WAVES = {
    drum: [3, 2.2, 3, .85, .7], bass: [4, 3, 4, .85, .4], key: [4, 3.4, 4, .8, .4],
    dense: [3, 4, 4, .95, .8], pad: [7, 3.8, 4, 1, .3], slow: [14, 3.8, 4, .8, .3],
    voice: [2.5, 1.3, 2, .4, .3], loud: [2.5, 2.6, 2, .55, .6], line: [4, 1.2, 2, .3, .7],
    flat: [500, .5, 1, 0, .3], tick: [2, 1.8, 1, .9, .2], sparse: [6, 2.4, 1, .9, .1]
};

let seed = 7;
function rnd() {
    seed = (seed * 16807) % 2147483647;
    return seed / 2147483647;
}

function wavePath(kind, width) {
    const [gap, peak, tail, chance, idle] = WAVES[kind];
    const mid = 5.5;
    const tops = [];
    let next = 1, hitAt = -99, height = 0;
    for (let x = 0; x <= width; x += 0.5) {
        if (x >= next) {
            next += gap;
            if (rnd() < chance) {
                hitAt = x;
                height = peak * (kind === 'pad' || kind === 'slow' ? 1 : .55 + rnd() * .45);
            }
        }
        const fade = Math.max(0, 1 - (x - hitAt) / tail);
        tops.push([x, Math.max(idle, height * fade)]);
    }
    const up = tops.map(([x, a]) => x + ' ' + (mid - a).toFixed(1));
    const down = tops.reverse().map(([x, a]) => x + ' ' + (mid + a).toFixed(1));
    return 'M' + up.join('L') + 'L' + down.join('L') + 'Z';
}

function use(id, cls) {
    return `<svg class="${cls || ''}"><use href="#${id}"/></svg>`;
}

function regionHtml(track, [start, end, name, opt = {}]) {
    const width = (end - start) * PX;
    let label = (opt.tempo ? use('i-updown', 'mark') : '') + `<span>${name}</span>`;
    if (opt.take) label += '<span class="gap"></span>' + use('i-take', 'mark');
    if (opt.loops) label += '<span class="gap"></span>' + use('i-loop', 'mark').repeat(opt.loops);
    let notches = '';
    if (opt.every) {
        for (let b = opt.every; b < end - start; b += opt.every) {
            notches += `<i class="notch" style="left:${(b / (end - start) * 100).toFixed(2)}%"></i>`;
        }
    }
    return `<div class="region ${track.skin}" style="left:${pct(start - 1)};width:${pct(end - start)}">
        <div class="label">${label}</div>
        <svg class="wave-shape" viewBox="0 0 ${width} 11" preserveAspectRatio="none"><path d="${wavePath(opt.wave || track.wave, width)}"/></svg>
        ${notches}</div>`;
}

function trackHtml(t) {
    const record = t.output ? '<div class="btn-pair"></div>'
        : '<div class="btn-pair"><button class="rec">R</button><button class="mon">I</button></div>';
    const mute = t.output ? '<button class="only">M</button>' : '<button>M</button><button>S</button>';
    return `<div class="track ${t.selected ? 'selected' : ''}">
        <span class="track-no" style="background:${COLORS[t.color]}">${t.no}</span>
        <span class="track-icon ${t.stack ? 'stack' : ''}" style="color:${t.tint || '#fff'}">${t.stack ? use('i-chev-right', 'disclosure') : ''}${use(t.icon)}</span>
        <div class="btn-pair">${mute}</div>${record}
        <button class="auto" aria-label="Automation">${use('i-auto')}</button>
        <span class="track-name">${t.name}</span><i class="track-dot"></i></div>`;
}

document.getElementById('trackList').innerHTML = TRACKS.map(trackHtml).join('');
document.getElementById('lanes').innerHTML = TRACKS.map(t =>
    `<div class="lane-row">${t.regions.map(r => regionHtml(t, r)).join('')}</div>`).join('');

// ruler and grid
let ruler = '', ticks = '', grid = '';
for (let bar = 0; bar < BARS; bar++) {
    if (bar % 4 === 0) ruler += `<span style="left:${pct(bar)}">${bar + 1}</span>`;
    const x = pct(bar);
    grid += `<line x1="${x}" x2="${x}" y1="0" y2="100%" stroke="${bar % 4 ? '#3c3c3c' : '#484848'}"/>`;
    ticks += `<line x1="${x}" x2="${x}" y1="0" y2="12" stroke="#707070"/>`;
    for (let q = 1; q < 4; q++) {
        ticks += `<line x1="${pct(bar + q / 4)}" x2="${pct(bar + q / 4)}" y1="6" y2="12" stroke="#6a6a6a"/>`;
    }
}
document.getElementById('ruler').innerHTML = ruler;
document.getElementById('rulerTicks').innerHTML = ticks;
document.getElementById('gridLines').innerHTML = grid;

// chord track
let chords = '';
const chord = (start, length, cls, text = '') => {
    chords += `<span class="chord ${cls}" style="left:${pct(start - 1)};width:${pct(length)}">${text}</span>`;
};
for (let bar = 1; bar < 74.5; bar += .5) chord(bar, .5, '', '');
[2.4, 6.4, 18.4, 39.4, 43.4, 47.4].forEach(bar => chord(bar, 1, 'boxed', 'G'));
[4.5, 8.5, 20.4, 41.5, 45.5, 49.5].forEach(bar => chord(bar, .5, 'name cut', 'C'));
[21, 50].forEach(bar => {
    chord(bar, 9, 'section');
    ['C', 'G', 'D', 'C', '', 'G', 'D', 'C'].forEach((text, i) => {
        if (text) chord(bar + i, 1, i ? 'name cut' : 'name', text);
    });
});
chord(74.5, 2.45, 'section', '&nbsp;G');
chord(77, 1, 'off', 'G');
document.getElementById('chords').innerHTML = chords;

// fader scales
document.querySelectorAll('.scale').forEach(el => {
    el.innerHTML = [0, 3, 6, 9, 12, 15, 18, 21, 24, 30, 35, 40, 45, 50, 60].map(n => `<span>${n}-</span>`).join('');
});
```
